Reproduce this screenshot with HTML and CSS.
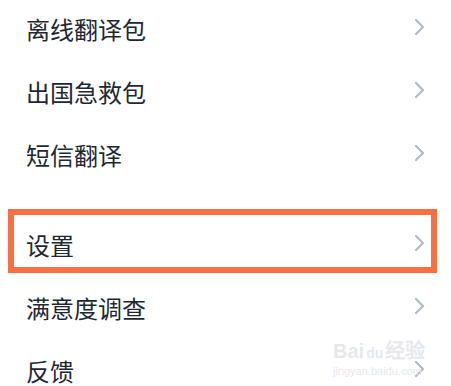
FILE: index.html
```html
<!DOCTYPE html>
<html lang="zh-CN">
<head>
  <meta charset="UTF-8" />
  <meta name="viewport" content="width=device-width, initial-scale=1.0"/>
  <title>更多</title>
  <link rel="stylesheet" href="styles.css">
</head>
<body>

  <div class="menu">
    <div class="group first">
      <div class="row"><span class="label">离线翻译包</span><svg class="arrow" viewBox="0 0 12 18"><polyline points="2,2 9,9 2,16"/></svg></div>
      <div class="row"><span class="label">出国急救包</span><svg class="arrow" viewBox="0 0 12 18"><polyline points="2,2 9,9 2,16"/></svg></div>
      <div class="row"><span class="label">短信翻译</span><svg class="arrow" viewBox="0 0 12 18"><polyline points="2,2 9,9 2,16"/></svg></div>
    </div>

    <div class="group">
      <div class="row marked"><span class="label">设置</span><svg class="arrow" viewBox="0 0 12 18"><polyline points="2,2 9,9 2,16"/></svg></div>
      <div class="row"><span class="label">满意度调查</span><svg class="arrow" viewBox="0 0 12 18"><polyline points="2,2 9,9 2,16"/></svg></div>
      <div class="row"><span class="label">反馈</span><svg class="arrow" viewBox="0 0 12 18"><polyline points="2,2 9,9 2,16"/></svg></div>
    </div>
  </div>

  <div class="watermark">
    <div class="wm-logo">Bai<span class="wm-du">du</span>经验</div>
    <div class="wm-url">jingyan.baidu.com</div>
  </div>

</body>
</html>
```

FILE: styles.css
```css
body {
  margin: 0;
  background: #ffffff;
  font-family: "Noto Sans CJK SC", "Noto Sans", sans-serif;
  overflow: hidden;
  position: relative;
  height: 386px;
}

.group {
  margin-top: 27px;
}

.group.first {
  margin-top: -4px;
}

.row {
  position: relative;
  height: 63px;
  display: flex;
  align-items: center;
  justify-content: space-between;
  padding: 0 25px 0 26px;
}

.label {
  font-size: 24px;
  line-height: 1;
  color: #1e2833;
  padding-top: 2px;
}

.arrow {
  width: 12px;
  height: 18px;
  margin-bottom: 2px;
}

.arrow polyline {
  fill: none;
  stroke: #b3bac6;
  stroke-width: 2.2;
  stroke-linecap: round;
  stroke-linejoin: round;
}

/* orange annotation frame around the settings row */
.marked::after {
  content: "";
  position: absolute;
  top: -3px;
  bottom: 2px;
  left: 8px;
  right: 14px;
  border: 6px solid #f86f43;
}

.watermark {
  position: absolute;
  left: 333px;
  top: 340px;
  color: #e6e8ec;
  font-family: "Liberation Sans", sans-serif;
  font-weight: bold;
}

.wm-logo {
  font-size: 20px;
  line-height: 22px;
}

.wm-du {
  font-size: 14px;
  margin: 0 2px;
}

.wm-url {
  font-size: 11px;
  font-weight: normal;
  margin-top: 1px;
}
```
